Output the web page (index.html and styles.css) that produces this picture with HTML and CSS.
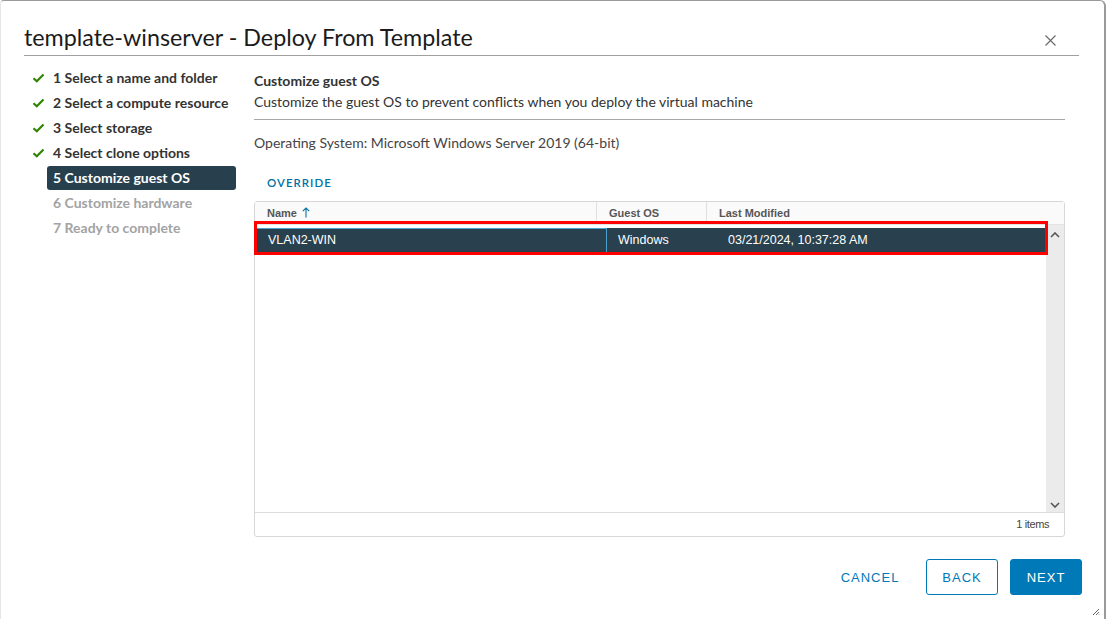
FILE: index.html
```html
<!DOCTYPE html>
<html>
<head>
<meta charset="utf-8">
<link rel="stylesheet" href="styles.css">
</head>
<body>
<div class="modal">
  <div class="header">
    <h1 class="title">template-winserver - Deploy From Template</h1>
    <svg class="close" width="11" height="11" viewBox="0 0 11 11"><path d="M0.5 0.5 L10.5 10.5 M10.5 0.5 L0.5 10.5" stroke="#666" stroke-width="1.1" fill="none"/></svg>
  </div>
  <div class="body">
    <ul class="steps">
      <li class="step done"><svg class="check" viewBox="0 0 12 10" width="12" height="10"><path d="M1 5.2 L4.3 8.3 L11 1.5" stroke="#2f8400" stroke-width="2.2" fill="none"/></svg><span>1 Select a name and folder</span></li>
      <li class="step done"><svg class="check" viewBox="0 0 12 10" width="12" height="10"><path d="M1 5.2 L4.3 8.3 L11 1.5" stroke="#2f8400" stroke-width="2.2" fill="none"/></svg><span>2 Select a compute resource</span></li>
      <li class="step done"><svg class="check" viewBox="0 0 12 10" width="12" height="10"><path d="M1 5.2 L4.3 8.3 L11 1.5" stroke="#2f8400" stroke-width="2.2" fill="none"/></svg><span>3 Select storage</span></li>
      <li class="step done"><svg class="check" viewBox="0 0 12 10" width="12" height="10"><path d="M1 5.2 L4.3 8.3 L11 1.5" stroke="#2f8400" stroke-width="2.2" fill="none"/></svg><span>4 Select clone options</span></li>
      <li class="step active"><span>5 Customize guest OS</span></li>
      <li class="step todo"><span>6 Customize hardware</span></li>
      <li class="step todo"><span>7 Ready to complete</span></li>
    </ul>
    <div class="content">
      <div class="page-head">
        <div class="page-title">Customize guest OS</div>
        <div class="page-sub">Customize the guest OS to prevent conflicts when you deploy the virtual machine</div>
      </div>
      <div class="os">Operating System: Microsoft Windows Server 2019 (64-bit)</div>
      <div class="override">OVERRIDE</div>
      <div class="grid">
        <div class="grid-head">
          <div class="col c1">Name <svg class="arrow" width="8" height="11" viewBox="0 0 8 11"><path d="M4 10.5 L4 1 M0.8 4.2 L4 1 L7.2 4.2" stroke="#0072a3" stroke-width="1.1" fill="none"/></svg></div>
          <div class="col c2">Guest OS</div>
          <div class="col c3">Last Modified</div>
        </div>
        <div class="grid-body">
          <div class="rows">
            <div class="row selected">
              <div class="cell c1">VLAN2-WIN</div>
              <div class="cell c2">Windows</div>
              <div class="cell c3">03/21/2024, 10:37:28 AM</div>
            </div>
            <div class="highlight"></div>
          </div>
          <div class="scrollbar">
            <svg width="10" height="6" viewBox="0 0 10 6"><path d="M1 5 L5 1 L9 5" stroke="#555" stroke-width="1.6" fill="none"/></svg>
            <svg width="10" height="6" viewBox="0 0 10 6"><path d="M1 1 L5 5 L9 1" stroke="#555" stroke-width="1.6" fill="none"/></svg>
          </div>
        </div>
        <div class="grid-foot">1 items</div>
      </div>
    </div>
  </div>
  <div class="footer">
    <button class="btn link">CANCEL</button>
    <button class="btn outline">BACK</button>
    <button class="btn primary">NEXT</button>
  </div>
  <svg class="grip" width="8" height="8" viewBox="0 0 8 8"><path d="M7 1 L1 7 M7 4 L4 7 M7 6.5 L6.5 7" stroke="#666" stroke-width="1" fill="none"/></svg>
</div>
</body>
</html>
```

FILE: styles.css
```css
html, body {
  margin: 0;
  padding: 0;
  background: #fff;
}
body {
  font-family: Lato, "Open Sans", sans-serif;
  color: #313131;
}
.modal {
  position: relative;
  width: 1103px;
  height: 618px;
  border-top: 1px solid #9a9a9a;
  border-right: 2px solid #9a9a9a;
  border-left: 1px solid #e6e6e6;
  border-radius: 4px 6px 0 0;
  display: flex;
  flex-direction: column;
  box-sizing: content-box;
}
.header {
  margin: 0 25px 0 23px;
  height: 55px;
  border-bottom: 1px solid #a0a0a0;
  display: flex;
  align-items: flex-end;
  justify-content: space-between;
  box-sizing: border-box;
}
.title {
  margin: 0 0 3px 0;
  font-size: 23.3px;
  font-weight: 400;
  line-height: 30px;
  color: #1b1b1b;
}
.close {
  margin: 0 23px 9px 0;
}
.body {
  display: flex;
  flex: 1;
  min-height: 0;
}
.steps {
  list-style: none;
  margin: 0;
  padding: 9px 0 0 31px;
  width: 205px;
  flex: none;
}
.step {
  display: flex;
  align-items: center;
  height: 25px;
  font-size: 14px;
  font-weight: 700;
  color: #333;
}
.step .check {
  width: 13px;
  margin-right: 8px;
}
.step.active, .step.todo {
  padding-left: 21px;
}
.step.active span {
  display: block;
  background: #28404d;
  color: #fff;
  margin-left: -6px;
  padding-left: 6px;
  width: 183px;
  height: 24px;
  line-height: 24px;
  border-radius: 3px;
}
.step.todo {
  color: #a3a3a3;
}
.content {
  flex: 1;
  margin-left: 17px;
  margin-right: 39px;
  display: flex;
  flex-direction: column;
}
.page-head {
  padding-top: 16px;
  border-bottom: 1px solid #a8a8a8;
  padding-bottom: 8px;
}
.page-title {
  font-size: 14px;
  font-weight: 700;
  color: #333;
  line-height: 18px;
}
.page-sub {
  font-size: 14px;
  color: #333;
  line-height: 18px;
  margin-top: 3px;
}
.os {
  font-size: 14px;
  color: #454545;
  margin-top: 14px;
  line-height: 18px;
}
.override {
  font-size: 11.5px;
  font-weight: 600;
  color: #0072a3;
  letter-spacing: 1px;
  margin: 24px 0 0 13px;
  line-height: 14px;
}
.grid {
  margin-top: 11px;
  height: 337px;
  border: 1px solid #d7d7d7;
  border-radius: 3px;
  display: flex;
  flex-direction: column;
  font-family: "Liberation Sans", Arial, sans-serif;
  box-sizing: border-box;
}
.grid-head {
  display: flex;
  height: 22px;
  background: #fafafa;
  border-bottom: 1px solid #e4e4e4;
  font-size: 11px;
  font-weight: 700;
  color: #565656;
  flex: none;
}
.col {
  line-height: 22px;
  padding-left: 12px;
  box-sizing: border-box;
}
.c1 { width: 342px; border-right: 1px solid #e0e0e0; }
.c2 { width: 110px; border-right: 1px solid #e0e0e0; }
.c3 { flex: 1; border-right: none; }
.arrow {
  margin-left: 2px;
  vertical-align: -1px;
}
.grid-body {
  flex: 1;
  display: flex;
  min-height: 0;
}
.rows {
  flex: 1;
  position: relative;
  padding: 3px 1px 0 1px;
}
.row {
  display: flex;
  height: 25px;
}
.row.selected {
  background: #29414e;
  color: #fff;
  font-size: 12.5px;
}
.cell {
  line-height: 25px;
  padding-left: 11px;
  box-sizing: border-box;
}
.row .c1 {
  width: 351px;
  border: 1px solid #49a3d0;
  line-height: 23px;
}
.row .c2 {
  width: 110px;
  border-right: none;
}
.row .c3 {
  padding-left: 11px;
}
.highlight {
  position: absolute;
  left: -1px;
  top: -4px;
  width: 794px;
  height: 34px;
  border: 3px solid #f00;
  box-sizing: border-box;
}
.scrollbar {
  width: 18px;
  background: #ebebeb;
  flex: none;
  display: flex;
  flex-direction: column;
  justify-content: space-between;
  align-items: center;
  padding: 7px 0 4px 0;
}
.grid-foot {
  height: 23px;
  border-top: 1px solid #dcdcdc;
  font-size: 11px;
  color: #444;
  text-align: right;
  line-height: 23px;
  padding-right: 15px;
  flex: none;
  letter-spacing: -0.4px;
}
.footer {
  height: 82px;
  display: flex;
  justify-content: flex-end;
  align-items: flex-start;
  padding: 22px 22px 0 0;
  box-sizing: border-box;
  gap: 12px;
}
.btn {
  height: 36px;
  font-family: "Liberation Sans", Arial, sans-serif;
  font-size: 13px;
  letter-spacing: 1px;
  border-radius: 3px;
  cursor: pointer;
  box-sizing: border-box;
}
.btn.link {
  background: transparent;
  border: 1px solid transparent;
  color: #0079b8;
  width: 84px;
  margin-right: 2px;
}
.btn.outline {
  background: #fff;
  border: 1px solid #0079b8;
  color: #0079b8;
  width: 72px;
}
.btn.primary {
  background: #0079b8;
  border: 1px solid #0079b8;
  color: #fff;
  width: 72px;
}
.grip {
  position: absolute;
  right: 4px;
  bottom: 3px;
}
```
